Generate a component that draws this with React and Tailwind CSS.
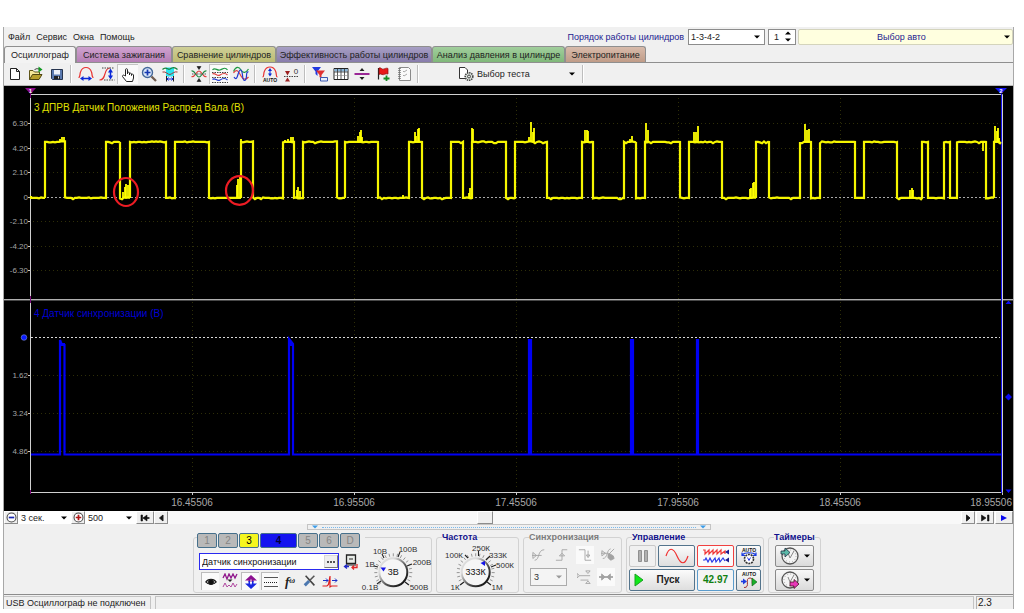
import React from "react";

const HIGH = 142;
const LOW = 198;

// [start, end] of every high level of the camshaft signal
const PULSES = [
  [45, 65], [106, 120], [130, 166], [175, 209], [241, 253], [283, 294], [303, 337],
  [345, 378], [409, 422], [451, 463], [472, 506], [515, 547], [582, 593], [624, 636],
  [645, 680], [689, 722], [756, 769], [800, 811], [820, 855], [864, 897], [922, 928],
  [944, 950], [957, 986], [994, 1001],
];

// [x, top, base] of the short spikes over the signal
const SPIKES = [
  [60, 139, HIGH], [62, 137, HIGH], [64, 137, HIGH],
  [123, 192, LOW], [125, 187, LOW], [126, 184, LOW], [128, 185, LOW],
  [237, 185, LOW], [238, 179, LOW], [240, 177, LOW], [241, 139, HIGH],
  [285, 140, HIGH], [288, 139, HIGH], [291, 137, HIGH], [293, 137, HIGH],
  [297, 190, LOW], [298, 187, LOW], [300, 191, LOW],
  [358, 136, HIGH], [360, 132, HIGH], [361, 130, HIGH], [362, 137, HIGH],
  [403, 195, LOW], [415, 132, HIGH], [416, 136, HIGH], [418, 129, HIGH], [419, 128, HIGH],
  [469, 193, LOW], [470, 188, LOW], [472, 128, HIGH], [473, 129, HIGH],
  [529, 137, HIGH], [531, 122, HIGH], [533, 132, HIGH], [534, 128, HIGH],
  [585, 130, HIGH], [587, 130, HIGH], [588, 131, HIGH], [630, 139, HIGH], [632, 136, HIGH],
  [646, 123, HIGH], [648, 130, HIGH],
  [694, 132, HIGH], [696, 132, HIGH], [698, 126, HIGH],
  [750, 189, LOW], [751, 188, LOW], [753, 183, LOW], [754, 182, LOW],
  [805, 124, HIGH], [807, 130, HIGH], [809, 129, HIGH],
  [910, 190, LOW], [912, 188, LOW], [913, 190, LOW], [983, 151, HIGH],
  [995, 126, HIGH], [997, 131, HIGH], [998, 128, HIGH], [999, 138, HIGH],
];

function level(from, to, y) {
  let d = "";
  for (let x = from; x <= to; x += 2) {
    const n = Math.abs(Math.sin(x * 12.9898) * 43758.5453) % 1;
    d += `L${x} ${y + (n > 0.94 ? 1.2 : n < 0.1 ? -0.6 : n < 0.3 ? 0.4 : -0.1)}`;
  }
  return d + `L${to} ${y}`;
}

function camPath() {
  let d = `M31 196`;
  let x = 31;
  PULSES.forEach(([a, b]) => {
    d += level(x, a, LOW) + level(a, b, HIGH);
    x = b;
  });
  return d;
}

const CAM = camPath();
const SPIKE_PATH = SPIKES.map(([x, t, b]) => `M${x} ${b}V${t}`).join("");

function Scope() {
  const gx = [192.5, 354.5, 516.5, 678.5, 840.5];
  const times = ["16.45506", "16.95506", "17.45506", "17.95506", "18.45506"];
  const top = [["6.30", 123], ["4.20", 148], ["2.10", 172], ["0", 197], ["-2.10", 221], ["-4.20", 246], ["-6.30", 270]];
  const low = [["1.62", 375], ["3.24", 413], ["4.86", 451]];
  return (
    <svg viewBox="4 86 1009 425" className="block h-auto w-full bg-black font-['Liberation_Sans',sans-serif]" role="img" aria-label="Осциллограмма">
      <g stroke="#2e2e08" strokeDasharray="1 3" fill="none">
        {gx.map((x) => <path key={x} d={`M${x} 98V490`} />)}
        {top.map(([t, y]) => t !== "0" && <path key={t} d={`M33 ${y + 0.5}H1000`} />)}
        {low.map(([t, y]) => <path key={t} d={`M33 ${y + 0.5}H1000`} />)}
      </g>
      <path d="M31 197.5H1000" stroke="#a8a8a8" strokeDasharray="2 2" />
      <path d="M31 337.5H1000" stroke="#d8d8d8" strokeDasharray="2 2" />
      <path d="M4 299.5H1013" stroke="#b0b0b0" />
      <path d="M4 300.5H1013" stroke="#484848" />
      <path d="M30.500 94.500H1002.500V492.500H30.500Z" fill="none" stroke="#d0d0d0" />
      <path d="M1001.500 94V493" stroke="#1010f0" />
      <g stroke="#c8c8c8">
        {top.concat(low).map(([t, y]) => <path key={t} d={`M28 ${y + 0.5}H31`} />)}
        {gx.concat(1002.5).map((x) => <path key={x} d={`M${x} 493V495`} />)}
      </g>
      <g fill="#a4a4a4" fontSize="8" textAnchor="end">
        {top.concat(low).map(([t, y]) => <text key={t} x="28" y={y + 3}>{t}</text>)}
      </g>
      <g fill="#a8a8a8" fontSize="10" textAnchor="middle">
        {times.map((t, i) => <text key={t} x={192 + i * 162} y="506">{t}</text>)}
        <text x="1012" y="506" textAnchor="end">18.95506</text>
      </g>
      <g fontSize="10">
        <text x="34" y="111" fill="#e0e000">3 ДПРВ Датчик Положения Распред Вала (В)</text>
        <text x="34" y="317" fill="#0000d4">4 Датчик синхронизации (В)</text>
      </g>
      <path d={CAM} fill="none" stroke="#f6f600" strokeWidth="2.200" />
      <path d={SPIKE_PATH} stroke="#ffff00" strokeWidth="1.800" />
      <g fill="none" stroke="#0000f4" strokeWidth="2.200">
        <path d="M31 454.500H60V340L62 345H64.500V454.500H289V339L293 344V454.500H529V340H531V454.500H631V340H633V454.500H697V340H698V454.500H1001" />
        <path d="M61 344H65M290 340V346M291 342V346" />
      </g>
      <g fill="none" stroke="#ed1c24" strokeWidth="2.200">
        <ellipse cx="126" cy="192" rx="12" ry="14" />
        <ellipse cx="239.500" cy="190.500" rx="13.500" ry="14.300" />
      </g>
      <path d="M25 88H36L30.500 94Z" fill="#8a0a8a" />
      <path d="M30.500 93V98M30.500 296V303M30.500 490V494" stroke="#7a087a" />
      <text x="30.500" y="93" fontSize="6" fontWeight="700" fill="#fff" textAnchor="middle">1</text>
      <path d="M995 88H1007L1001 94Z" fill="#1414f4" />
      <text x="1001" y="93" fontSize="6" fontWeight="700" fill="#fff" textAnchor="middle">2</text>
      <circle cx="24" cy="337.500" r="2.800" fill="#0a1cff" stroke="#8090e0" strokeWidth=".6" />
      <g fill="#0a0af4">
        <path d="M1008.500 300.500L1011.500 304H1005.500ZM1008.500 493L1011.500 489.500H1005.500ZM1008.500 393.500L1012 397L1008.500 400.500L1005 397Z" />
      </g>
    </svg>
  );
}

function Svg({ children, className = "size-4", box = "0 0 16 16" }) {
  return (
    <svg viewBox={box} className={className + " shrink-0"} fill="none" stroke="currentColor" aria-hidden="true">
      {children}
    </svg>
  );
}

const Down = ({ className = "text-black" }) => (
  <svg viewBox="0 0 6 4" className={"h-1 w-1.5 shrink-0 " + className} fill="currentColor" aria-hidden="true">
    <path d="M0 0.500H6L3 3.500Z" />
  </svg>
);

const icons = {
  file: <Svg><path d="M3.500 2.500H9.500L12.500 5.500V13.500H3.500ZM9.500 2.500V5.500H12.500" fill="#fff" stroke="#222" /></Svg>,
  open: (
    <Svg>
      <path d="M1.500 13.500V4.500H5L6.500 6H11.500V8" fill="#f5e79a" stroke="#5f5518" />
      <path d="M1.500 13.500L4.500 8.500H14L11 13.500Z" fill="#b79f2c" stroke="#4e4510" />
      <path d="M6.500 4C7.500 2.500 9 2.500 11 3" stroke="#333" />
      <path d="M10.500 .5L14.500 3.500L10.500 6.500Z" fill="#109a20" stroke="none" />
    </Svg>
  ),
  save: (
    <Svg>
      <path d="M2.500 3.500H13.500V13.500H3.500L2.500 12.500Z" fill="#5b7ab0" stroke="#26344e" />
      <path d="M5 4H11V8.500H5Z" fill="#eef2fa" stroke="none" />
      <path d="M5 10H11V13H5Z" fill="#222" stroke="none" /><path d="M9 10.500H10V12.500H9Z" fill="#ddd" stroke="none" />
    </Svg>
  ),
  arch: (
    <Svg>
      <path d="M.5 11.500C2.500 11.500 1.500 8.500 2.500 6C3.500 3 6 1.500 8 1.500S12.500 3 13.500 6C14.500 8.500 13.500 11.500 15.500 11.500" stroke="#e83030" strokeWidth="1.200" />
      <path d="M4 12.500H12" stroke="#0a28d8" strokeWidth="1.500" /><path d="M2 12.500L5.500 10V15ZM14 12.500L10.500 10V15Z" fill="#0a28d8" stroke="none" />
    </Svg>
  ),
  sineArrow: (
    <Svg>
      <path d="M.5 14C8 14 4 2 11 2" stroke="#e83030" strokeWidth="1.200" />
      <path d="M3 2H15.500M5 14H15.500" stroke="#444" strokeDasharray="1.500 1" />
      <path d="M11.500 5V11" stroke="#0a28d8" strokeWidth="1.500" /><path d="M11.500 2.500L14 6.500H9ZM11.500 13.500L14 9.500H9Z" fill="#0a28d8" stroke="none" />
    </Svg>
  ),
  hand: (
    <Svg>
      <path d="M5.500 9V2.500C5.500 1.500 7.500 1.500 7.500 2.500V7V5.500C7.500 5 9.500 5 9.500 6V8V6.500C9.500 6 11.500 6 11.500 7V8.500V7.500C11.500 7 13.500 7 13.500 8V11L12.500 14.500H6.500L2.500 9.500C2 8.500 3.500 7.500 4.500 8.500Z" fill="#fff" stroke="#222" />
    </Svg>
  ),
  zoom: (
    <Svg>
      <circle cx="6.500" cy="6.500" r="5" fill="#dbe8fa" stroke="#44689a" strokeWidth="1.400" />
      <path d="M6.500 3.500V9.500M3.500 6.500H9.500" stroke="#1638b0" strokeWidth="1.700" /><path d="M10.500 10.500L15 15" stroke="#705c50" strokeWidth="2.300" />
    </Svg>
  ),
  cyan: (
    <Svg>
      <path d="M4 1.500H12V10.500H4Z" fill="#28e4f0" stroke="none" />
      <path d="M.5 3.500C4 -.5 6 4.500 8 3S12.500 .5 15.500 3.500" stroke="#18803a" strokeWidth="1.200" />
      <path d="M.5 6C4 5 6 9 8 8.500S12.500 5 15.500 6" stroke="#a03838" />
      <path d="M4.500 10V15.500M11.500 10V15.500" stroke="#222" /><path d="M5 13H11M6.500 11.500L5 13L6.500 14.500M9.500 11.500L11 13L9.500 14.500" stroke="#0a28d8" />
    </Svg>
  ),
  cross: (
    <Svg>
      <path d="M.5 10.500C4 12 5 5 8 5S12 12 15.500 10.500" stroke="#e04040" strokeWidth="1.200" />
      <path d="M.5 5C4 4 5 11 8 11S12 4 15.500 5" stroke="#1f8c44" strokeWidth="1.200" /><path d="M1 8H15" stroke="#555" strokeDasharray="1.500 1" />
      <path d="M8 0V3M8 13V16M6 .5L8 3.500L10 .5ZM6 15.500L8 12.500L10 15.500Z" stroke="#222" fill="#222" strokeWidth=".6" />
    </Svg>
  ),
  waves3: (
    <Svg>
      <path d="M.5 3C3 -.5 5 4 8 3S13 -.5 15.500 3" stroke="#1f9a44" strokeWidth="1.200" />
      <path d="M.5 7C3 5 5 10 8 8S13 5.500 15.500 8" stroke="#e04040" strokeWidth="1.200" />
      <path d="M.5 12.500C3 10 5 15 8 13S13 10.500 15.500 13" stroke="#2038d0" strokeWidth="1.200" />
      <path d="M0 5.500H16M0 10.500H16M0 15.500H16" stroke="#444" strokeDasharray="1.500 1" />
    </Svg>
  ),
  mixed: (
    <Svg>
      <path d="M.5 5.500C3 0 6 .5 8 4S13 7 15.500 3" stroke="#1f9a44" strokeWidth="1.200" />
      <path d="M.5 7C4 2 6 6 8 10S13 14 15.500 11" stroke="#e04040" strokeWidth="1.200" />
      <path d="M1 11C5 17 4.500 4 7.500 4C10.500 4 8.500 14.500 11.500 14.500C15 14.500 12 5 15.500 6" stroke="#2038d0" strokeWidth="1.200" />
    </Svg>
  ),
  autoArch: (
    <Svg>
      <path d="M.5 11C2.500 11 1 8 2.500 5C3.500 2.500 6 1 8 1S12.500 2.500 13.500 5C15 8 13.500 11 15.500 11" stroke="#e83030" strokeWidth="1.200" />
      <path d="M8 3.500V9" stroke="#0a28d8" /><path d="M8 2L10 5H6ZM8 10.500L10 7.500H6Z" fill="#0a28d8" stroke="none" />
      <text x="8" y="15.500" fontSize="5" fontWeight="700" fill="#111" stroke="none" textAnchor="middle">AUTO</text>
    </Svg>
  ),
  zero: (
    <Svg>
      <path d="M1 10.500H15" stroke="#444" strokeDasharray="1.500 1" /><path d="M2 5H7L4.500 9.500ZM2 15.500H7L4.500 11.500Z" fill="#9c2020" stroke="none" />
      <text x="13" y="8" fontSize="8" fill="#333" stroke="none" textAnchor="middle">0</text>
    </Svg>
  ),
  filter: (
    <Svg>
      <path d="M0 1H9L5.500 5.500V10L3.500 8V5.500Z" fill="#2038e0" stroke="none" /><path d="M4 4.500H13L9.500 9V13L7.500 11V9Z" fill="#e03030" stroke="none" />
      <path d="M8.500 11.500H15.500V15H8.500Z" fill="#e8eefc" stroke="#3a58b0" />
    </Svg>
  ),
  table: (
    <Svg>
      <path d="M1 2.500H15V13.500H1Z" fill="#fff" stroke="#222" /><path d="M1.500 3H14.500V5.500H1.500Z" fill="#88b4d8" stroke="none" />
      <path d="M1 6H15M4.500 3V13M8 3V13M11.500 3V13" stroke="#333" strokeWidth=".8" /><path d="M1 9.500H15" stroke="#888" strokeWidth=".6" />
    </Svg>
  ),
  divide: <Svg><path d="M.5 8H15.500" stroke="#90108c" strokeWidth="1.800" /><path d="M8 2L10.500 5H5.500ZM8 14L10.500 11H5.500Z" fill="#222" stroke="none" /></Svg>,
  flag: (
    <Svg>
      <path d="M3.500 2V13.500" stroke="#222" strokeWidth="1.200" /><path d="M4 2C6 1 7 4 9 3S12 2 13 2.500V8C10 7 9 9.500 7 8.500S5 8 4 8.500Z" fill="#e81818" stroke="#881010" strokeWidth=".7" />
      <path d="M11.500 9.500V15M8.500 12.500H14.500" stroke="#148a20" strokeWidth="1.800" />
    </Svg>
  ),
  doc: (
    <Svg>
      <path d="M3.500 1.500H12.500L14.500 3.500V14.500H3.500Z" fill="#fafafa" stroke="#8a8a8a" /><path d="M3.500 2V14" stroke="#777" strokeWidth="2.500" strokeDasharray="1 1" />
      <path d="M7 5L8 6L11 4M7 9L8 10L11 8" stroke="#aaa" />
    </Svg>
  ),
};

function ToolGroup({ names, pressed = [] }) {
  return (
    <div className="flex">
      {names.map(([n, label]) => (
        <button
          key={n}
          type="button"
          aria-label={label}
          className={"flex h-5 w-[21px] items-center justify-center " + (pressed.includes(n) ? "border-l border-t border-[#c4c4c4] bg-[#fafafa]" : "")}
        >
          {icons[n]}
        </button>
      ))}
    </div>
  );
}

const Sep = () => <div className="mx-[3px] h-[18px] w-0.5 border-l border-r border-l-[#bdbdbd] border-r-white" />;

function Combo({ label, value, className, selectClass = "", arrow }) {
  return (
    <div className={"relative flex items-center " + className}>
      <select aria-label={label} defaultValue={value} className={"h-full w-full appearance-none bg-transparent pl-[3px] outline-none " + selectClass}>
        <option>{value}</option>
      </select>
      <span className="pointer-events-none absolute right-1 flex"><Down className={arrow} /></span>
    </div>
  );
}

const TABS = [
  ["Осциллограф", "w-[72px] h-[17px] bg-[#f3f3f3]"],
  ["Система зажигания", "w-[96px] h-4 bg-linear-to-b from-[#cfa3cf] to-[#b67fb6]"],
  ["Сравнение цилиндров", "w-[104px] h-4 bg-linear-to-b from-[#cfcf98] to-[#bcbc72]"],
  ["Эффективность работы цилиндров", "w-[156px] h-4 bg-linear-to-b from-[#a79fc4] to-[#887cab]"],
  ["Анализ давления в цилиндре", "w-[133px] h-4 bg-linear-to-b from-[#a2cf9d] to-[#80b87a]"],
  ["Электропитание", "w-[81px] h-4 bg-linear-to-b from-[#d8bbab] to-[#c09c88]"],
];

function Header() {
  return (
    <header>
      <div className="flex h-[19px] items-center">
        <nav className="flex flex-1 gap-1.5 pl-1">
          {["Файл", "Сервис", "Окна", "Помощь"].map((m) => (
            <button key={m} type="button" className="text-[#222]">{m}</button>
          ))}
        </nav>
        <label htmlFor="order" className="pr-1 text-[#1c1c90]">Порядок работы цилиндров</label>
        <div className="relative mr-[3px] flex h-4 w-[77px] items-center border border-[#8c8c8c] bg-white">
          <select id="order" defaultValue="1-3-4-2" className="h-full w-full appearance-none bg-transparent pl-0.5 outline-none">
            <option>1-3-4-2</option>
          </select>
          <span className="pointer-events-none absolute right-1 flex"><Down /></span>
        </div>
        <div className="mr-0.5 flex h-4 w-7 items-center border border-[#8c8c8c] bg-white">
          <input aria-label="Номер цилиндра" defaultValue="1" className="w-4 bg-transparent pl-[5px] outline-none" />
          <div className="flex flex-col gap-[3px]">
            <button type="button" aria-label="Больше" className="flex rotate-180"><Down /></button>
            <button type="button" aria-label="Меньше" className="flex"><Down /></button>
          </div>
        </div>
        <button type="button" className="flex h-4 w-[215px] items-center rounded-xs border border-[#d4d4bc] bg-[#ffffdf] pr-0.5 text-[#1c1c90]">
          <span className="flex-1 text-center">Выбор авто</span>
          <Down />
        </button>
      </div>
      <div role="tablist" className="flex h-[17px] items-end border-b border-[#8f8f8f]">
        {TABS.map(([t, c], i) => (
          <button
            key={t}
            type="button"
            role="tab"
            aria-selected={i === 0}
            className={"shrink-0 whitespace-nowrap rounded-t-[3px] border border-b-0 border-[#8f8f8f] text-center text-[#222] " + (i === 0 ? "-mb-px " : "") + c}
          >
            {t}
          </button>
        ))}
      </div>
    </header>
  );
}

function Toolbar() {
  return (
    <div className="flex h-[23px] items-center border-b border-[#b8b8b8]">
      <ToolGroup names={[["file", "Новый"], ["open", "Открыть"], ["save", "Сохранить"]]} />
      <Sep />
      <ToolGroup names={[["arch", "Растянуть по горизонтали"], ["sineArrow", "Растянуть по вертикали"], ["hand", "Рука"], ["zoom", "Масштаб"], ["cyan", "Диапазон"]]} pressed={["hand"]} />
      <Sep />
      <ToolGroup names={[["cross", "Совместить"], ["waves3", "Разделить"], ["mixed", "Наложить"]]} pressed={["waves3"]} />
      <Sep />
      <ToolGroup names={[["autoArch", "Автомасштаб"], ["zero", "Ноль"]]} />
      <Sep />
      <ToolGroup names={[["filter", "Фильтр"], ["table", "Таблица"], ["divide", "Линейка"], ["flag", "Флаг"], ["doc", "Отчёт"]]} />
      <Sep />
      <button type="button" className="ml-8 flex h-5 w-[125px] items-center gap-[3px] pl-1 pr-1 text-[#222]">
        <Svg>
          <path d="M1.500 1.500H7L9.500 4V12.500H1.500Z" fill="#fff" stroke="#333" />
          <circle cx="11" cy="10.500" r="3.800" fill="#dfe6e0" stroke="#444" strokeWidth="1.600" strokeDasharray="1.400 .8" /><circle cx="11" cy="10.500" r="1.500" stroke="#444" />
        </Svg>
        <span className="flex-1 text-left">Выбор теста</span>
        <Down />
      </button>
      <Sep />
    </div>
  );
}

const navBtn = "flex h-[13px] items-center justify-center border border-t-white border-l-white border-b-[#8c8c8c] border-r-[#8c8c8c] bg-[#efefef]";

function ScrollRow() {
  return (
    <div className="flex h-[13px] items-center bg-[#f8f8f8]">
      <button type="button" aria-label="Уменьшить" className={navBtn + " w-3.5"}>
        <Svg className="size-[11px]"><circle cx="8" cy="8" r="6.500" fill="#fff" stroke="#444" strokeWidth="1.500" /><path d="M4 8H12" stroke="#1a28b0" strokeWidth="2.500" /></Svg>
      </button>
      <Combo label="Длительность" value="3 сек." className="h-[13px] w-[53px] bg-white" />
      <button type="button" aria-label="Увеличить" className={navBtn + " w-3.5"}>
        <Svg className="size-[11px]"><circle cx="8" cy="8" r="6.500" fill="#fff" stroke="#444" strokeWidth="1.500" /><path d="M4 8H12M8 4V12" stroke="#b01818" strokeWidth="2.500" /></Svg>
      </button>
      <Combo label="Масштаб времени" value="500" className="h-[13px] w-[51px] bg-white" />
      <button type="button" aria-label="В начало" className={navBtn + " w-[18px]"}>
        <Svg className="h-2 w-2.5" box="0 0 10 8"><path d="M1 1H2.500V7H1ZM3 4L7 1V7ZM3 4H9" fill="#111" stroke="#111" strokeWidth=".6" /><path d="M7 4H9.500" stroke="#111" strokeWidth="1.500" /></Svg>
      </button>
      <button type="button" aria-label="Назад" className={navBtn + " w-3.5"}>
        <Svg className="h-2 w-1.5" box="0 0 6 8"><path d="M5 1V7L1.500 4Z" fill="#111" /></Svg>
      </button>
      <div className="flex h-full flex-1 items-center">
        <div className="w-[39%]" />
        <button type="button" aria-label="Ползунок" className={navBtn + " w-4"} />
      </div>
      <button type="button" aria-label="Вперёд" className={navBtn + " w-3.5"}>
        <Svg className="h-2 w-1.5" box="0 0 6 8"><path d="M1.500 1V7L5 4Z" fill="#111" /></Svg>
      </button>
      <button type="button" aria-label="В конец" className={navBtn + " ml-px w-[18px]"}>
        <Svg className="h-2 w-2.5" box="0 0 10 8"><path d="M7.500 1H9V7H7.500ZM1.500 1V7L6 4Z" fill="#111" stroke="#111" strokeWidth=".6" /></Svg>
      </button>
      <button type="button" aria-label="Воспроизвести" className={navBtn + " ml-px w-[18px]"}>
        <Svg className="h-2 w-1.5" box="0 0 6 8"><path d="M0 1V7L6 4Z" fill="#0a0af0" stroke="none" /></Svg>
      </button>
    </div>
  );
}

function Dial({ label, value, marks, pointer, start, box, cx, cy, className, id }) {
  const ticks = [];
  for (let a = 140; a <= 400; a += 13) {
    const r = (a * Math.PI) / 180;
    ticks.push(`M${cx + 16 * Math.cos(r)} ${cy + 16 * Math.sin(r)}L${cx + 19 * Math.cos(r)} ${cy + 19 * Math.sin(r)}`);
  }
  return (
    <label className={"relative block " + className}>
      <svg viewBox={box} className="block h-full w-full overflow-visible" aria-hidden="true">
        <defs>
          <linearGradient id={id} x1="0.100" y1="0.100" x2="0.900" y2="0.900">
            <stop offset="0.200" stopColor="#dcdcdc" /><stop offset="0.600" stopColor="#555" /><stop offset="1" stopColor="#111" />
          </linearGradient>
        </defs>
        <path d={ticks.join("")} stroke="#8a8a8a" strokeWidth=".9" />
        <circle cx={cx} cy={cy} r="14" fill="#f6f6f6" stroke={`url(#${id})`} strokeWidth="2" />
        <g stroke="#222" strokeWidth="1.100"><path d={start} /></g>
        <path d={pointer} fill="#1414e8" />
        <g fontSize="8" fill="#303030" textAnchor="middle">
          {marks.map(([t, x, y]) => <text key={t} x={x} y={y + 3}>{t}</text>)}
        </g>
        <text x={cx} y={cy + 3} fontSize="9" fill="#111" textAnchor="middle">{value}</text>
      </svg>
      <input type="range" aria-label={label} className="absolute inset-0 h-full w-full cursor-pointer opacity-0" />
    </label>
  );
}

const CHANNELS = [
  ["1", "w-5 bg-[#b9b9b9] text-[#858585]"],
  ["2", "w-5 bg-[#b9b9b9] text-[#858585]"],
  ["3", "w-5 bg-[#f6f61e] text-black"],
  ["4", "w-[37px] bg-[#1414f0] font-bold text-[#00003c]"],
  ["5", "w-5 bg-[#b9b9b9] text-[#858585]"],
  ["6", "w-5 bg-[#b9b9b9] text-[#858585]"],
  ["D", "w-5 bg-[#b9b9b9] text-[#858585]"],
];

const flat = "flex h-[18px] w-[18px] items-center justify-center ";
const sunk = flat + "border-l border-t border-[#bcbcbc] bg-[#fafafa]";

function ChannelPanel() {
  return (
    <div className="relative h-[60px] w-[239px]">
      <div className="mt-1 h-14 rounded-[3px] border border-[#d2d2d2]" />
      <div className="absolute inset-0 flex">
        <div className="flex w-[176px] flex-col pl-1">
          <div className="flex w-[168px] gap-px bg-[#f0f0f0]">
            {CHANNELS.map(([n, c]) => (
              <button key={n} type="button" className={"h-[15px] shrink-0 rounded-xs border border-[#46708c] text-[10px] leading-none " + c}>{n}</button>
            ))}
          </div>
          <div className="mt-[5px] flex items-center gap-1 pl-0.5">
            <div className="flex h-[17px] w-[140px] items-center border border-[#2a2af0] bg-white">
              <input aria-label="Канал" defaultValue="Датчик синхронизации" className="min-w-0 flex-1 bg-transparent pl-0.5 text-[#111] outline-none" />
              <button type="button" aria-label="Выбрать датчик" className="flex h-[13px] w-3.5 items-center justify-center border border-[#d8d8d8] border-b-[#777] border-r-[#777] bg-[#eee]">
                <Svg className="h-0.5 w-2" box="0 0 8 2"><path d="M0 1H2M3 1H5M6 1H8" stroke="#222" strokeWidth="1.500" /></Svg>
              </button>
            </div>
            <button type="button" aria-label="Обновить датчик">
              <Svg>
                <path d="M3.500 1H12.500V9.500H3.500Z" fill="#e8ece8" stroke="#222" strokeWidth="1.300" /><path d="M3 11H13M6 5H10" stroke="#222" />
                <path d="M4 14.500L1.500 12.500L4 10.500M1.500 12.500H6" stroke="#2028c8" strokeWidth="1.300" /><path d="M9 13.500H14V10M11 11.500L9 13.500L11 15.500" stroke="#e02828" strokeWidth="1.300" />
              </Svg>
            </button>
          </div>
          <div className="mt-0.5 flex gap-0.5 pl-1">
            <button type="button" aria-label="Видимость" className={sunk}>
              <Svg className="size-3"><path d="M1 8C4 3 12 3 15 8C12 12 4 12 1 8Z" fill="#bbb" stroke="#111" strokeWidth="1.500" /><circle cx="8" cy="8" r="3.500" fill="#111" /></Svg>
            </button>
            <button type="button" aria-label="Сигналы" className={flat}>
              <Svg><path d="M1 5L3 1L5 6L7 1L9 5L11 1L13 5L15 1" stroke="#90188c" strokeWidth="1.300" /><path d="M1 14L3 10L5 14L7 12L9 14L11 10L13 14L15 11" stroke="#b048a0" /><path d="M5.500 6.500H10.500L8 9Z" fill="#222" stroke="none" /></Svg>
            </button>
            <button type="button" aria-label="Сдвиг" className={sunk}>
              <Svg><path d="M8 1L14 6.500H10.500V8H5.500V6.500H2Z" fill="#8c1090" stroke="none" /><path d="M5.500 7H7V9.500H9V7H10.500V9.500H14L8 15L2 9.500H5.500Z" fill="#1828e0" stroke="none" /><path d="M7.500 5.500H8.500V10.500H7.500Z" fill="#fff" stroke="none" /></Svg>
            </button>
            <button type="button" aria-label="Линии" className={sunk}>
              <Svg><path d="M1 3.500H15M1 12.500H15" stroke="#555" /><path d="M1 8.500H15" stroke="#222" strokeDasharray="1 1" /></Svg>
            </button>
            <button type="button" aria-label="Функция" className={flat + "font-['Liberation_Serif',serif] text-[13px] font-bold italic leading-none"}>
              f<span className="text-[8px]">ω</span>
            </button>
            <button type="button" aria-label="Настройка" className={flat}>
              <Svg className="size-3.5"><path d="M3 2L13 13" stroke="#444" strokeWidth="1.800" /><path d="M13 2L7 8" stroke="#555" strokeWidth="1.800" /><path d="M2 13L7 8" stroke="#4c78b0" strokeWidth="3.500" /></Svg>
            </button>
            <button type="button" aria-label="Импульс" className={flat}>
              <Svg><path d="M.5 13H5L6.500 11.500L8 3V14L9.500 13H15.500" stroke="#e02020" strokeWidth="1.200" /><path d="M1 7.500H6M4 5.500L6 7.500L4 9.500M10 7.500H15M13 5.500L15 7.500L13 9.500" stroke="#1c30c8" /></Svg>
            </button>
          </div>
        </div>
        <Dial
          id="voltRing" label="Вольтаж" value="3В" cx={393.3} cy={572.3} box="369 533 62 60" className="h-[60px] w-[62px]"
          marks={[["10В", 380, 551], ["100В", 408, 549], ["1В", 370, 564], ["200В", 422, 562], ["0.1В", 370, 587], ["500В", 419, 587]]}
          start="M384 558L382 554M398 557L400 552M407 566L412 564M378 567L374 566M381 581L377 584M405 582L409 585"
          pointer="M380.500 567.500L386 567.500L383.500 571.500Z"
        />
      </div>
    </div>
  );
}

function Group({ title, className, titleClass = "text-[#10108c]", children }) {
  return (
    <fieldset className={"h-[60px] min-w-0 rounded-[3px] border border-[#d2d2d2] " + className}>
      <legend className={"ml-[5px] h-[9px] text-[9px] font-bold leading-[9px] " + titleClass}>{title}</legend>
      {children}
    </fieldset>
  );
}

const ctl = "flex h-[22px] items-center justify-center rounded-xs border ";
const steel = ctl + "border-[#54748c] bg-linear-to-b from-[#fbfbfb] to-[#dedede]";
const grey = ctl + "border-[#8a8a8a] bg-linear-to-b from-[#f8f8f8] to-[#dadada]";

function SyncPanel() {
  const off = "text-[#a2a2a2]";
  const cell = "flex h-[18px] w-[18px] items-center justify-center ";
  return (
    <Group title="Синхронизация" className="w-[99px]" titleClass="text-[#7c7c7c]">
      <div className={"flex flex-col gap-1 pl-1.5 pt-1 " + off}>
        <div className="flex gap-[5px]">
          <button type="button" disabled aria-label="Уровень" className={cell}><Svg className="size-3.5"><path d="M1 5V12L5 8.500ZM0 8.500H11M3 14C9 14 6 2 14 2" /></Svg></button>
          <button type="button" disabled aria-label="Фронт" className={cell}><Svg className="size-3.5"><path d="M1 14H8V2H14M8 6L5 9H11Z" /></Svg></button>
          <button type="button" disabled aria-label="Спад" className={cell + "bg-[#fafafa]"}><Svg className="size-3.5"><path d="M1 2H8V14H15M11.500 3V10M9.500 8L11.500 11L13.500 8Z" /></Svg></button>
          <button type="button" disabled aria-label="Выключить" className={cell}><Svg className="size-3.5"><path d="M1 3V9L5 6ZM0 6H9M2 12C8 12 6 2 11 1M15 1L8 8" /><path d="M8 7L10 6.500L14 9L15 12L11 14L8 11Z" fill="currentColor" /></Svg></button>
        </div>
        <div className="flex items-center">
          <Combo label="Канал синхронизации" value="3" className="mr-2 h-[18px] w-[37px] border border-[#ababab] bg-[#f4f4f4]" selectClass="text-[#333]" arrow="text-[#999]" />
          <button type="button" disabled aria-label="Пороги" className={cell}><Svg className="size-3.5"><path d="M0 4V9L3 6.500ZM3 6.500H15M4 11.500H13M10 1H15L12.500 4ZM10 15.500H15L12.500 12.500Z" /></Svg></button>
          <button type="button" disabled aria-label="По центру" className={cell + "ml-1 bg-[#fafafa]"}><Svg className="size-3.5"><path d="M0 8H16" strokeWidth="2" /><path d="M3 4.500L7 8L3 11.500ZM13 4.500L9 8L13 11.500Z" fill="currentColor" /></Svg></button>
        </div>
      </div>
    </Group>
  );
}

function ControlPanel() {
  return (
    <Group title="Управление" className="w-[138px]">
      <div className="grid grid-cols-[27px_37px_37px_25px] gap-0.5 pl-0.5 pt-[3px]">
        <button type="button" disabled aria-label="Пауза" className={ctl + "border-[#c8c8c8]"}>
          <Svg className="h-3.5 w-3" box="0 0 12 14"><path d="M1.500 1.500H4.500V12.500H1.500ZM7.500 1.500H10.500V12.500H7.500Z" fill="#b0b0b0" stroke="#909090" /></Svg>
        </button>
        <button type="button" aria-label="Синусоида" className={steel}>
          <Svg className="h-4 w-6" box="0 0 24 16"><path d="M1 8C4 -1 8 -1 12 8S20 17 23 8" stroke="#f03030" strokeWidth="1.200" /></Svg>
        </button>
        <button type="button" aria-label="Сигналы" className={ctl + "border-[#f04040] bg-[#fbfbfb]"}>
          <Svg className="h-4 w-7" box="0 0 28 16">
            <path d="M1 2H3V6L7 2V6L11 2V6L15 2V6L19 2V6L23 3V6" stroke="#f03838" strokeWidth="1.200" />
            <path d="M1 12H3L4 10L6 14L8 10L10 14L13 10L14 14L17 10L18 14L21 10L23 13" stroke="#2838e8" strokeWidth="1.200" />
            <path d="M27 1.500V6.500L23 4ZM27 9.500V14.500L23 12Z" fill="#1c1c90" stroke="none" />
          </Svg>
        </button>
        <button type="button" aria-label="Авто напряжение" className={steel}>
          <Svg className="h-[18px] w-5" box="0 0 20 18">
            <text x="10" y="5" fontSize="5" fontWeight="700" fill="#111" stroke="none" textAnchor="middle">AUTO</text>
            <path d="M3 8C6 5 14 5 17 8M3 5.500V8.500H6M17 5.500V8.500H14" stroke="#1c3ce0" strokeWidth="1.200" />
            <circle cx="10" cy="12" r="4.500" fill="#fff" stroke="#333" strokeWidth="1.600" strokeDasharray="2 .8" /><path d="M8.500 10.500L10 13.500L11.500 10.500" stroke="#2838e8" />
          </Svg>
        </button>
        <button type="button" className={steel + " col-span-2 gap-3 pr-2.5 text-[10px] font-bold text-[#222]"}>
          <Svg className="h-3.5 w-2.5" box="0 0 10 14"><path d="M1 1L9 7L1 13Z" fill="#10e818" stroke="#18a020" /></Svg>
          Пуск
        </button>
        <output className={ctl + "border-[#5c9ccc] bg-[#f4f4f4] text-[10px] font-bold text-[#108010]"}>42.97</output>
        <button type="button" aria-label="Авто пуск" className={steel}>
          <Svg className="h-[18px] w-5" box="0 0 20 18">
            <text x="10" y="5" fontSize="5" fontWeight="700" fill="#111" stroke="none" textAnchor="middle">AUTO</text>
            <path d="M5 16.500C12 17 5 7 11 7C15 7 12 12 14 14" stroke="#a03030" /><path d="M2 10.500H6" stroke="#1c3ce0" strokeWidth="1.600" />
            <path d="M4 7.500L8 10.500L4 13.500Z" fill="#1c3ce0" stroke="none" /><path d="M13 7L18 11L13 15Z" fill="#18b028" stroke="#106018" strokeWidth=".6" />
          </Svg>
        </button>
      </div>
    </Group>
  );
}

function Clock({ children }) {
  return (
    <Svg className="h-[18px] w-5" box="0 0 20 18">
      <circle cx="10" cy="9" r="8" fill="#f4f4f4" stroke="#555" strokeWidth="1.300" />
      <circle cx="10" cy="9" r="6" stroke="#999" strokeDasharray=".8 2.300" />
      <path d="M8 6L10 11L14 4" stroke="#888" />
      {children}
    </Svg>
  );
}

export default function App() {
  return (
    <div className="bg-white pb-1 pl-[3px] pr-2.5 pt-[27px] font-['Liberation_Sans',Arial,sans-serif] text-[9px] leading-3 text-[#222]">
      <div className="border-x border-l-[#a8a8a8] border-r-[#a8a8a8] bg-[#f0f0f0]">
        <Header />
        <Toolbar />
        <Scope />
        <ScrollRow />
        <div className="flex justify-center border-b border-[#8c8c8c] pb-px">
          <div>
            <div className="flex justify-center">
              <button type="button" aria-label="Свернуть панель" className="mb-[3px] flex h-1.5 w-[404px] items-center gap-1 border border-[#c4c4c4] px-1">
                <Down className="text-[#3c9ce8]" />
                <span className="flex-1 border-t border-dotted border-[#78b8ec]" />
                <Down className="text-[#3c9ce8]" />
              </button>
            </div>
            <div className="flex gap-1 pr-[3px]">
              <ChannelPanel />
              <Group title="Частота" className="w-[83px]">
                <Dial
                  id="freqRing" label="Частота" value="333К" cx={475.7} cy={572.3} box="437 542 81 50" className="h-[50px] w-[81px]"
                  marks={[["100К", 454, 555], ["250К", 481, 548], ["333К", 498, 555], ["500К", 505, 565], ["1К", 455, 587], ["1М", 497, 587]]}
                  start="M468 558L465 555M478.500 556V551M486 560L490 556M491 567L496 565M464 582L460 585M487 582L491 585"
                  pointer="M485 561V566L480.500 563Z"
                />
              </Group>
              <SyncPanel />
              <ControlPanel />
              <Group title="Таймеры" className="w-[53px]">
                <div className="flex flex-col gap-0.5 pl-1.5 pt-[3px]">
                  <button type="button" aria-label="Таймер включения" className={grey + " w-[39px] gap-1"}>
                    <Clock><path d="M1 4H5V1L10 5.500L5 10V7H1Z" fill="#5cb8a8" stroke="#234" strokeWidth=".8" /></Clock>
                    <Down />
                  </button>
                  <button type="button" aria-label="Таймер выключения" className={grey + " w-[39px] gap-1"}>
                    <Clock><path d="M10 11H14V8.500L19 13L14 17.500V15H10Z" fill="#e838b8" stroke="#412" strokeWidth=".8" /></Clock>
                    <Down />
                  </button>
                </div>
              </Group>
            </div>
          </div>
        </div>
        <footer className="flex h-3.5 items-center gap-1 pt-px">
          <div className="h-[13px] w-[147px] border-r border-t border-[#c4c4c4] pl-0.5">USB Осциллограф не подключен</div>
          <div className="h-[13px] flex-1 border-x border-t border-[#c4c4c4]" />
          <div className="-ml-0.5 h-[13px] w-[37px] border-l border-t border-[#b4b4b4] pl-px text-[10px]">2.3</div>
        </footer>
      </div>
    </div>
  );
}
